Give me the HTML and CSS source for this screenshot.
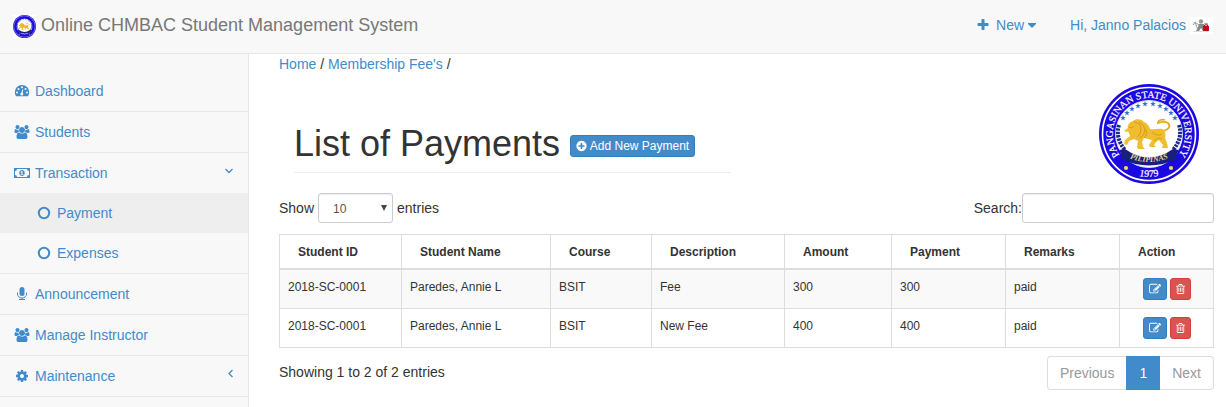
FILE: index.html
```html
<!DOCTYPE html>
<html lang="en">
<head>
    <meta charset="utf-8">
    <meta name="viewport" content="width=device-width, initial-scale=1">
    <title>Online CHMBAC Student Management System</title>
    <link rel="stylesheet" href="styles.css">
</head>
<body>
    <svg class="sprite" aria-hidden="true">
        <symbol id="users" viewBox="-64 0 1920 1792"><path d="M529 896q-162 5-265 128h-134q-82 0-138-40.5t-56-118.500q0-353 124-353 6 0 43.500 21t97.500 42.500 119 21.500q67 0 133-23-5 37-5 66 0 139 81 256zm1071 637q0 120-73 189.500t-194 69.500h-874q-121 0-194-69.500t-73-189.500q0-53 3.500-103.500t14-109 26.500-108.500 43-97.500 62-81 85.500-53.500 111.500-20q10 0 43 21.500t73 48 107 48 135 21.500 135-21.500 107-48 73-48 43-21.500q61 0 111.500 20t85.500 53.500 62 81 43 97.500 26.500 108.500 14 109 3.500 103.500zm-1024-1277q0 106-75 181t-181 75-181-75-75-181 75-181 181-75 181 75 75 181zm704 384q0 159-112.500 271.500t-271.500 112.500-271.500-112.500-112.500-271.500 112.500-271.500 271.500-112.500 271.500 112.500 112.500 271.500zm576 225q0 78-56 118.500t-138 40.500h-134q-103-123-265-128 81-117 81-256 0-29-5-66 66 23 133 23 59 0 119-21.500t97.500-42.500 43.500-21q124 0 124 353zm-128-609q0 106-75 181t-181 75-181-75-75-181 75-181 181-75 181 75 75 181z"/></symbol>
        <symbol id="edit" viewBox="0 0 1792 1792"><path d="M888 1184l116-116-152-152-116 116v56h96v96h56zm440-720q-16-16-33 1l-350 350q-17 17-1 33t33-1l350-350q17-17 1-33zm80 594v190q0 119-84.5 203.5t-203.5 84.5h-832q-119 0-203.5-84.5t-84.5-203.5v-832q0-119 84.5-203.5t203.5-84.5h832q63 0 117 25 15 7 18 23 3 17-9 29l-49 49q-14 14-32 8-23-6-45-6h-832q-66 0-113 47t-47 113v832q0 66 47 113t113 47h832q66 0 113-47t47-113v-126q0-13 9-22l64-64q15-15 35-7t20 29zm-96-738l288 288-672 672h-288v-288zm444 132l-92 92-288-288 92-92q28-28 68-28t68 28l152 152q28 28 28 68t-28 68z"/></symbol>
        <symbol id="trash" viewBox="192 0 1408 1792"><path d="M704 736v576q0 14-9 23t-23 9h-64q-14 0-23-9t-9-23v-576q0-14 9-23t23-9h64q14 0 23 9t9 23zm256 0v576q0 14-9 23t-23 9h-64q-14 0-23-9t-9-23v-576q0-14 9-23t23-9h64q14 0 23 9t9 23zm256 0v576q0 14-9 23t-23 9h-64q-14 0-23-9t-9-23v-576q0-14 9-23t23-9h64q14 0 23 9t9 23zm128 724v-948h-896v948q0 22 7 40.5t14.5 27 10.5 8.5h832q3 0 10.5-8.5t14.5-27 7-40.5zm-672-1076h448l-48-117q-7-9-17-11h-317q-10 2-17 11zm928 32v64q0 14-9 23t-23 9h-96v948q0 83-47 143.5t-113 60.5h-832q-66 0-113-58.5t-47-141.5v-952h-96q-14 0-23-9t-9-23v-64q0-14 9-23t23-9h309l70-167q15-37 54-63t79-26h320q40 0 79 26t54 63l70 167h309q14 0 23 9t9 23z"/></symbol>
        <symbol id="star" viewBox="-5 -5 10 10"><path d="M0-5 1.2-1.6 4.8-1.5 1.9.6 3 4 0 2-3 4-1.9.6-4.8-1.5-1.2-1.6z"/></symbol>
        <symbol id="seal" viewBox="0 0 100 100">
            <circle cx="50" cy="50" r="50" fill="#1c08e0"/>
            <circle cx="50" cy="50" r="46.5" fill="none" stroke="#fff" stroke-width="1.6"/>
            <circle cx="50" cy="50" r="33.5" fill="#fff" stroke="#d9d6ff" stroke-width="1"/>
            <g fill="#2f6fd0">
                <use href="#star" x="21" y="31" width="6" height="6"/>
                <use href="#star" x="25" y="26" width="6" height="6"/>
                <use href="#star" x="30" y="22" width="6" height="6"/>
                <use href="#star" x="36" y="19" width="6" height="6"/>
                <use href="#star" x="43" y="17" width="6" height="6"/>
                <use href="#star" x="51" y="17" width="6" height="6"/>
                <use href="#star" x="58" y="19" width="6" height="6"/>
                <use href="#star" x="64" y="22" width="6" height="6"/>
                <use href="#star" x="69" y="26" width="6" height="6"/>
                <use href="#star" x="73" y="31" width="6" height="6"/>
            </g>
            <!-- laurels -->
            <path d="M20 41q-4 13 6 25M80 41q4 13-6 25" fill="none" stroke="#1b2a86" stroke-width="4" stroke-dasharray="2.4 1"/>
            <!-- lion -->
            <path d="M63 47c7-1 9-5 6-8-3-2-7-1-10 0 0-3 4-4 7-3" fill="none" stroke="#e3ac20" stroke-width="1.8"/>
            <path d="M29 44c-1-3 2-6 5-7 3-3 9-2 11 1 3 1 5 4 6 7 4 1 8-1 12 0 4 2 4 6 3 9l2 5 1 5h-6l1-3-4-5-3 2-2 3 2 2h-6l-1-2 3-5-8-2-2 4 1 5 2 2h-7l-1-2 1-6-4-2-5 2-2 4-3-1 1-4 5-4-2-5-1 1-3-1z" fill="#f0bd31"/>
            <path d="M35 38q7 1 7 7t-4 8M40 38q6 3 6 8t-5 8M46 45q4 4-1 9M53 48q5 5 10 2M30 43l3 1 2-2M55 57l4-3 4 1" fill="none" stroke="#c78d14" stroke-width=".7"/>
            <!-- ribbon -->
            <path d="M20 66l6-1q24 17 48 0l6 1-3 5 1 4q-28 13-56 0l1-4z" fill="#17207c"/>
            <circle cx="27" cy="84" r="2.1" fill="#f6dd36"/>
            <circle cx="72" cy="84" r="2.1" fill="#f6dd36"/>
        </symbol>
    </svg>

    <nav class="navbar">
        <a class="brand" href="#">
            <svg class="brand-logo"><use href="#seal"/></svg>
            Online CHMBAC Student Management System
        </a>
        <div class="top-links">
            <button class="top-link" type="button">
                <svg class="icon" viewBox="0 0 1792 1792"><path d="M1600 736v192q0 40-28 68t-68 28h-416v416q0 40-28 68t-68 28h-192q-40 0-68-28t-28-68v-416h-416q-40 0-68-28t-28-68v-192q0-40 28-68t68-28h416v-416q0-40 28-68t68-28h192q40 0 68 28t28 68v416h416q40 0 68 28t28 68z"/></svg>
                New
                <svg class="caret" viewBox="0 0 8 5"><path d="M0 0h8v1L4 5 0 1z"/></svg>
            </button>
            <a class="top-link" href="#">
                Hi, Janno Palacios
                <svg class="avatar" viewBox="0 0 23 17">
                    <rect width="23" height="17" fill="#fff"/>
                    <path d="M2 14h16v1H4z" fill="#ddd"/>
                    <circle cx="11" cy="4.5" r="2.2" fill="#999"/>
                    <path d="M9 7h5l1 3 1 4h-3l-2-3-2 3H6l2-4z" fill="#888"/>
                    <path d="M9 8L5 5 3 8M5 5l3 8M14 7l3-1 1 3" fill="none" stroke="#999"/>
                    <path d="M13 9h6v5h-6z" fill="#c00c18"/>
                    <path d="M14 9q2-3 4 0" fill="none" stroke="#800"/>
                </svg>
            </a>
        </div>
    </nav>

    <div class="wrapper">
        <aside class="sidebar">
            <ul class="side-menu">
                <li>
                    <a href="#">
                        <svg class="icon" viewBox="0 0 18 14">
                            <path d="M9 1a7.200 7.200 0 0 0-7.200 7.200c0 1.500.4 2.700 1.100 3.800q.2.300.5.300h11.200q.3 0 .5-.3c.7-1.100 1.100-2.300 1.100-3.800A7.200 7.200 0 0 0 9 1z"/>
                            <g fill="#f8f8f8"><circle cx="4" cy="8.500" r="1"/><circle cx="5.500" cy="5" r="1"/><circle cx="9" cy="3.300" r="1"/><circle cx="12.500" cy="5" r="1"/><circle cx="14" cy="8.500" r="1"/><circle cx="8.800" cy="10" r="1.500"/><path d="M8.200 9.500l1.300-4.300.8.200-.9 4.400z"/></g>
                        </svg>
                        Dashboard
                    </a>
                </li>
                <li><a href="#"><svg class="icon"><use href="#users"/></svg> Students</a></li>
                <li>
                    <a href="#">
                        <svg class="icon" viewBox="0 0 18 14">
                            <path fill-rule="evenodd" d="M1 2h16v10H1zM4 3a2 2 0 0 1-2 2v4a2 2 0 0 1 2 2h10a2 2 0 0 1 2-2V5a2 2 0 0 1-2-2z"/>
                            <path fill-rule="evenodd" d="M9 4c1.800 0 2.700 1.400 2.700 3S10.800 10 9 10 6.300 8.600 6.300 7 7.200 4 9 4zM8.700 5L7.500 6v.8l1-.4v2h-1V9h3v-.6h-1V5z"/>
                        </svg>
                        Transaction
                        <svg class="arrow" viewBox="0 0 10 10"><path d="M1.500 3L5 6.500 8.500 3"/></svg>
                    </a>
                    <ul class="sub-menu">
                        <li><a class="active" href="#"><svg class="icon line" viewBox="0 0 18 14"><circle cx="9" cy="7" r="5.200"/></svg> Payment</a></li>
                        <li><a href="#"><svg class="icon line" viewBox="0 0 18 14"><circle cx="9" cy="7" r="5.200"/></svg> Expenses</a></li>
                    </ul>
                </li>
                <li>
                    <a href="#">
                        <svg class="icon" viewBox="0 0 18 14">
                            <rect x="6.500" y="0" width="5" height="9" rx="2.500"/>
                            <path d="M4.500 5.500V7a4.500 4 0 0 0 9 0V5.500M9 11v2M6 12.500h6" fill="none" stroke="currentColor"/>
                        </svg>
                        Announcement
                    </a>
                </li>
                <li><a href="#"><svg class="icon"><use href="#users"/></svg> Manage Instructor</a></li>
                <li>
                    <a href="#">
                        <svg class="icon" viewBox="0 0 1792 1792"><path d="M1152 896q0-106-75-181t-181-75-181 75-75 181 75 181 181 75 181-75 75-181zm512-109v222q0 12-8 23t-20 13l-185 28q-19 54-39 91 35 50 107 138 10 12 10 25t-9 23q-27 37-99 108t-94 71q-12 0-26-9l-138-108q-44 23-91 38-16 136-29 186-7 28-36 28h-222q-14 0-24.5-8.5t-11.5-21.5l-28-184q-49-16-90-37l-141 107q-10 9-25 9-14 0-25-11-126-114-165-168-7-10-7-23 0-12 8-23 15-21 51-66.5t54-70.5q-27-50-41-99l-183-27q-13-2-21-12.5t-8-23.5v-222q0-12 8-23t19-13l186-28q14-46 39-92-40-57-107-138-10-12-10-24 0-10 9-23 26-36 98.5-107.5t94.5-71.5q13 0 26 10l138 107q44-23 91-38 16-136 29-186 7-28 36-28h222q14 0 24.5 8.5t11.5 21.5l28 184q49 16 90 37l142-107q9-9 24-9 13 0 25 10 129 119 165 170 7 8 7 22 0 12-8 23-15 21-51 66.5t-54 70.5q26 50 41 98l183 28q13 2 21 12.5t8 23.5z"/></svg>
                        Maintenance
                        <svg class="arrow" viewBox="0 0 10 10"><path d="M8.500 1L5 4.500 8.500 8"/></svg>
                    </a>
                </li>
            </ul>
        </aside>

        <main class="content">
            <div class="breadcrumb"><a href="#">Home</a> / <a href="#">Membership Fee's</a> /</div>

            <header class="page-top">
                <h1>List of Payments
                    <button class="btn btn-primary" type="button"><svg class="btn-icon add" viewBox="128 0 1536 1792"><path d="M1344 960v-128q0-26-19-45t-45-19h-256v-256q0-26-19-45t-45-19h-128q-26 0-45 19t-19 45v256h-256q-26 0-45 19t-19 45v128q0 26 19 45t45 19h256v256q0 26 19 45t45 19h128q26 0 45-19t19-45v-256h256q26 0 45-19t19-45zm320-64q0 209-103 385.5t-279.5 279.5-385.5 103-385.5-103-279.5-279.5-103-385.5 103-385.5 279.5-279.5 385.5-103 385.5 103 279.5 279.5 103 385.5z"/></svg> Add New Payment</button>
                </h1>
                <svg class="seal" viewBox="0 0 100 100" role="img" aria-label="Pangasinan State University">
                    <use href="#seal"/>
                    <path id="ring-top" d="M25.300 76.500A36.200 36.200 0 1 1 74.700 76.500" fill="none"/>
                    <path id="ring-bottom" d="M25 85A43 43 0 0 0 75 85" fill="none"/>
                    <path id="ribbon" d="M25 72Q50 84 75 72" fill="none"/>
                    <text class="seal-name"><textPath href="#ring-top" startOffset="50%">PANGASINAN STATE UNIVERSITY</textPath></text>
                    <text class="seal-name"><textPath href="#ring-bottom" startOffset="50%">1979</textPath></text>
                    <text class="seal-ribbon"><textPath href="#ribbon" startOffset="50%">PILIPINAS</textPath></text>
                </svg>
            </header>

            <div class="table-tools">
                <label>Show
                    <select class="control length">
                        <option>10</option>
                        <option>25</option>
                        <option>50</option>
                        <option>100</option>
                    </select>
                    entries</label>
                <label class="search">Search:<input class="control" type="search"></label>
            </div>

            <table class="payments">
                <colgroup>
                    <col class="c-id"><col class="c-name"><col class="c-course"><col class="c-desc">
                    <col class="c-amount"><col class="c-payment"><col class="c-remarks"><col class="c-action">
                </colgroup>
                <thead>
                    <tr>
                        <th>Student ID</th>
                        <th>Student Name</th>
                        <th>Course</th>
                        <th>Description</th>
                        <th>Amount</th>
                        <th>Payment</th>
                        <th>Remarks</th>
                        <th>Action</th>
                    </tr>
                </thead>
                <tbody>
                    <tr>
                        <td>2018-SC-0001</td>
                        <td>Paredes, Annie L</td>
                        <td>BSIT</td>
                        <td>Fee</td>
                        <td>300</td>
                        <td>300</td>
                        <td>paid</td>
                        <td>
                            <div class="actions">
                                <button class="btn btn-primary" type="button" aria-label="Edit"><svg class="btn-icon edit"><use href="#edit"/></svg></button>
                                <button class="btn btn-danger" type="button" aria-label="Delete"><svg class="btn-icon trash"><use href="#trash"/></svg></button>
                            </div>
                        </td>
                    </tr>
                    <tr>
                        <td>2018-SC-0001</td>
                        <td>Paredes, Annie L</td>
                        <td>BSIT</td>
                        <td>New Fee</td>
                        <td>400</td>
                        <td>400</td>
                        <td>paid</td>
                        <td>
                            <div class="actions">
                                <button class="btn btn-primary" type="button" aria-label="Edit"><svg class="btn-icon edit"><use href="#edit"/></svg></button>
                                <button class="btn btn-danger" type="button" aria-label="Delete"><svg class="btn-icon trash"><use href="#trash"/></svg></button>
                            </div>
                        </td>
                    </tr>
                </tbody>
            </table>

            <div class="table-footer">
                <div class="info">Showing 1 to 2 of 2 entries</div>
                <div class="pagination">
                    <a href="#">Previous</a>
                    <a class="current" href="#">1</a>
                    <a href="#">Next</a>
                </div>
            </div>
        </main>
    </div>
</body>
</html>
```
FILE: styles.css
```css
* {
    box-sizing: border-box;
}
body {
    margin: 0;
    min-height: 100vh;
    display: flex;
    flex-direction: column;
    font: 14px/20px "Liberation Sans", Arial, sans-serif;
    color: #333;
    background: #fff;
}
a {
    color: #428bca;
    text-decoration: none;
}
ul {
    margin: 0;
    padding: 0;
    list-style: none;
}
button, input, select {
    font-family: inherit;
}
.sprite {
    position: absolute;
    width: 0;
    height: 0;
}
.icon {
    width: 18px;
    height: 14px;
    flex: none;
    fill: currentColor;
}
.icon.line {
    fill: none;
    stroke: currentColor;
    stroke-width: 2;
}

/* navbar */
.navbar {
    display: flex;
    justify-content: space-between;
    align-items: flex-start;
    padding: 15px 13px;
    background: #f8f8f8;
    border-bottom: 1px solid #e7e7e7;
}
.brand {
    display: flex;
    align-items: flex-start;
    gap: 5px;
    font-size: 18px;
    color: #777;
}
.brand-logo {
    width: 23px;
    height: 23px;
    background: #fff;
}
.top-links {
    display: flex;
    gap: 34px;
}
.top-link {
    display: flex;
    align-items: center;
    gap: 4px;
    padding: 0;
    border: 0;
    background: none;
    color: #428bca;
    font-size: 14px;
    line-height: 20px;
}
.caret {
    width: 8px;
    height: 5px;
    fill: currentColor;
}
.avatar {
    width: 23px;
    height: 17px;
}

/* sidebar */
.wrapper {
    flex: 1;
    display: flex;
}
.sidebar {
    flex: none;
    width: 249px;
    padding-top: 17px;
    background: #f8f8f8;
    border-right: 1px solid #e7e7e7;
}
.side-menu > li {
    border-bottom: 1px solid #e7e7e7;
}
.side-menu a {
    display: flex;
    align-items: center;
    gap: 4px;
    padding: 10px 13px;
}
.sub-menu a {
    padding-left: 35px;
}
.side-menu a.active {
    background: #eee;
}
.arrow {
    width: 10px;
    height: 10px;
    margin: 0 1px 5px auto;
    fill: none;
    stroke: currentColor;
    stroke-width: 1.3;
}

/* content */
.content {
    flex: 1;
    padding: 0 14px 10px 30px;
}
.page-top {
    display: flex;
    justify-content: space-between;
    align-items: flex-start;
    padding: 10px 15px 0;
}
h1 {
    width: calc(50% + 15px);
    max-width: 437px;
    margin: 40px 0 20px;
    padding-bottom: 8px;
    border-bottom: 1px solid #eee;
    font-size: 36px;
    font-weight: 500;
    line-height: 40px;
}
.seal {
    width: 100px;
    height: 100px;
}
.seal-name {
    font: 10px "Liberation Serif", serif;
    fill: #fff;
    stroke: #fff;
    stroke-width: 0.2px;
    text-anchor: middle;
}
.seal-ribbon {
    font: italic bold 8px "Liberation Serif", serif;
    fill: #e8d98a;
    text-anchor: middle;
}
.btn {
    padding: 1px 5px;
    border: 1px solid;
    border-radius: 3px;
    font-size: 12px;
    line-height: 18px;
    color: #fff;
    vertical-align: middle;
}
.btn-primary {
    background: #428bca;
    border-color: #357ebd;
}
.btn-danger {
    background: #d9534f;
    border-color: #d43f3a;
}
.btn-icon {
    width: 12px;
    height: 12px;
    fill: currentColor;
    vertical-align: -2px;
}
.btn-icon.add {
    width: 11px;
}
.btn-icon.trash {
    width: 9px;
}
.table-tools {
    display: flex;
    justify-content: space-between;
    margin-bottom: 11px;
}
.table-tools label {
    display: flex;
    align-items: center;
    gap: 4px;
    line-height: 28px;
}
.table-tools .search {
    gap: 0;
}
.control {
    width: 192px;
    height: 30px;
    padding: 5px 10px;
    border: 1px solid #ccc;
    border-radius: 3px;
    box-shadow: inset 0 1px 1px rgba(0,0,0,0.075);
    background: #fff;
    color: #555;
    font-size: 12px;
}
.length {
    width: 75px;
    padding: 6px 10px 4px 14px;
    appearance: none;
    background: #fff url("data:image/svg+xml,%3Csvg xmlns='http://www.w3.org/2000/svg' width='6' height='6'%3E%3Cpath d='M0 0h6L3 6z' fill='%23444'/%3E%3C/svg%3E") no-repeat right 5px center;
}

/* table */
.payments {
    width: 100%;
    table-layout: fixed;
    border-collapse: collapse;
    font-size: 12px;
    line-height: 19px;
}
.c-id { width: 122px; }
.c-name { width: 149px; }
.c-course { width: 101px; }
.c-desc { width: 133px; }
.c-amount { width: 107px; }
.c-payment, .c-remarks { width: 114px; }
.c-action { width: 94px; }
.payments th, .payments td {
    padding: 8px;
    border: 1px solid #ddd;
    text-align: left;
    vertical-align: top;
}
.payments th {
    padding: 8px 8px 6px 18px;
    border-bottom-width: 2px;
}
.payments tbody tr:nth-child(odd) {
    background: #f9f9f9;
}
.actions {
    display: flex;
    justify-content: center;
    gap: 3px;
}
.table-footer {
    display: flex;
    justify-content: space-between;
    margin-top: 8px;
}
.info {
    padding-top: 6px;
}
.pagination {
    display: flex;
}
.pagination a {
    padding: 6px 12px;
    border: 1px solid #ddd;
    border-width: 1px 0;
    color: #999;
}
.pagination a:first-child {
    border-left-width: 1px;
    border-radius: 4px 0 0 4px;
}
.pagination a:last-child {
    border-right-width: 1px;
    border-radius: 0 4px 4px 0;
}
.pagination a.current {
    padding: 6px 13px;
    background: #428bca;
    border-color: #428bca;
    color: #fff;
}
```
